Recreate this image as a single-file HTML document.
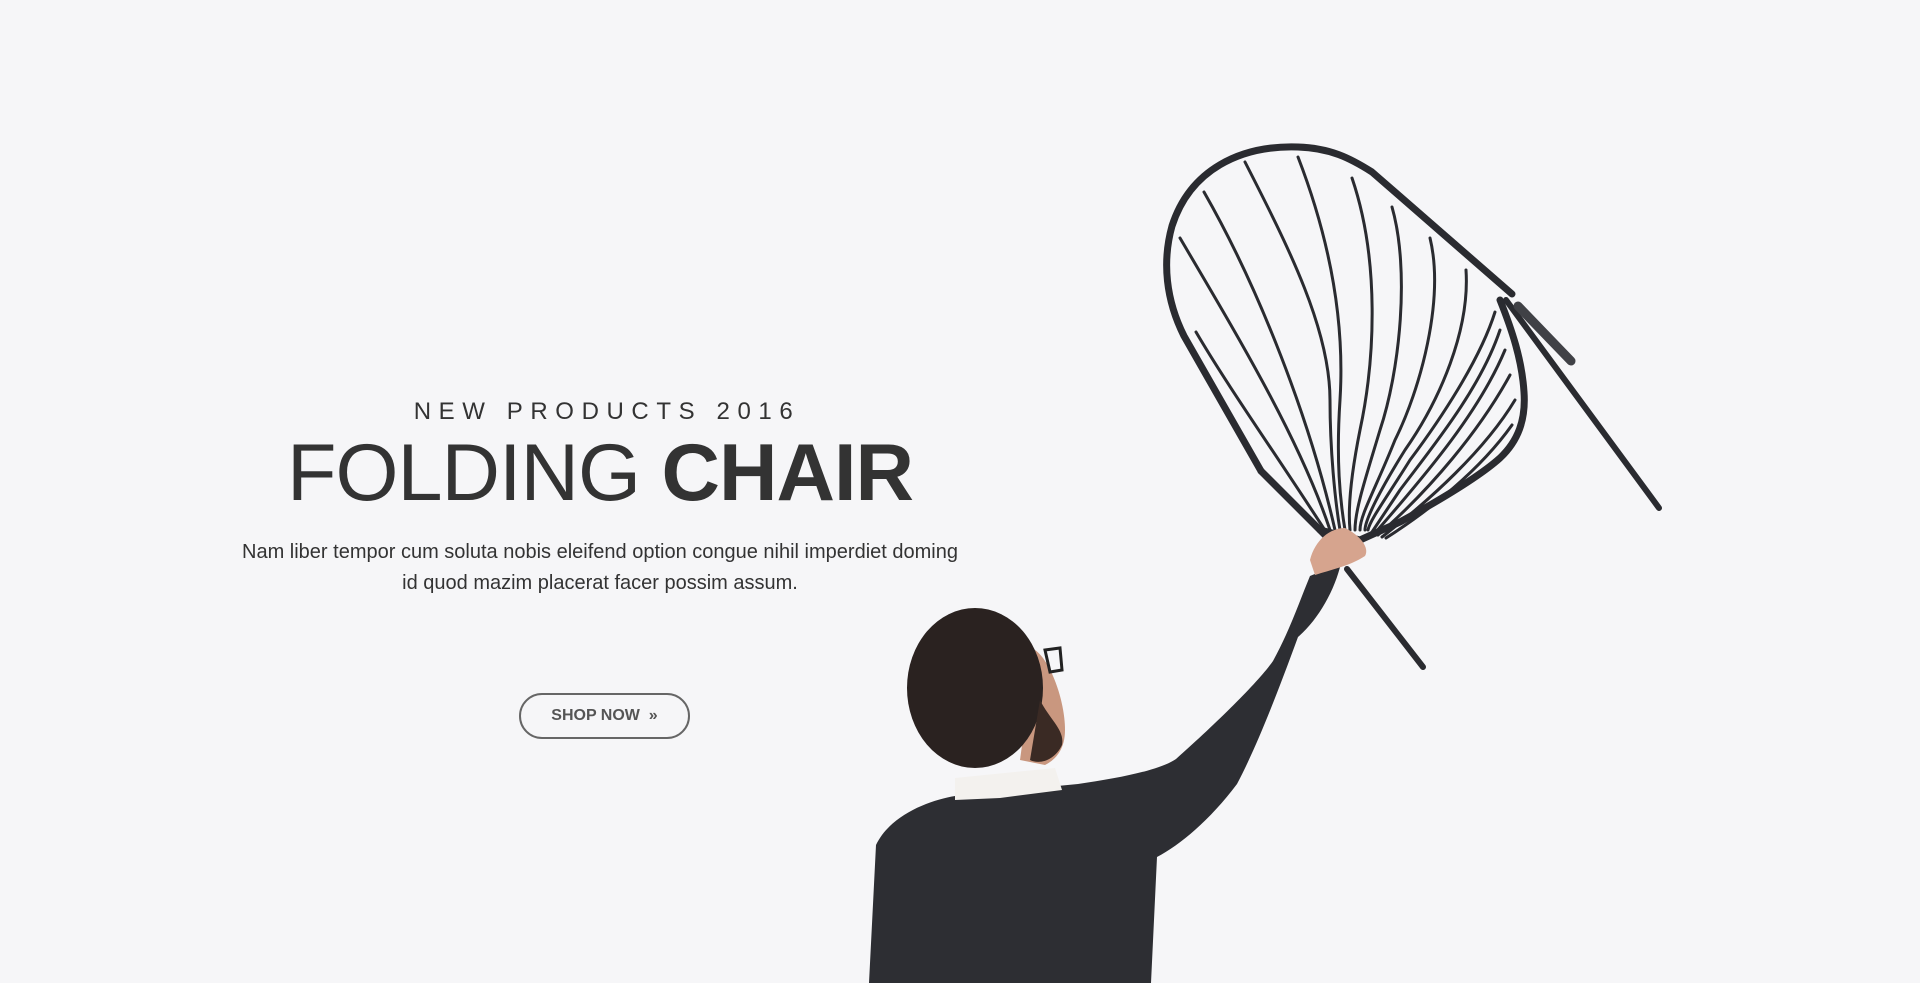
<!DOCTYPE html>
<html><head><meta charset="utf-8"><style>
html,body{margin:0;padding:0;width:1920px;height:983px;overflow:hidden;background:#f6f6f8;font-family:"Liberation Sans",sans-serif;color:#333}
.t{position:absolute;left:0;width:1200px;text-align:center}
#sub{top:398px;font-size:24px;letter-spacing:7.6px;color:#333;padding-left:7px}
#h{top:428px;font-size:81px;letter-spacing:-1px;color:#333;line-height:90px}
#h b{font-weight:900}
#p{top:537px;font-size:20px;line-height:31px;color:#333}
#btn{position:absolute;left:519px;top:693px;width:167px;height:42px;border:2px solid #666;border-radius:24px;text-align:center;line-height:42px;font-size:16px;font-weight:bold;color:#555}
svg{position:absolute;left:0;top:0}
</style></head><body>
<svg width="1920" height="983" viewBox="0 0 1920 983">
<g fill="none" stroke="#2a2b30" stroke-linecap="round">
<path stroke-width="7" d="M1261 471 L1184 336 C1166 300 1162 262 1172 226 C1190 170 1240 145 1298 147 C1330 148 1350 158 1372 172 L1512 294"/>
<path stroke-width="7" d="M1500 300 C1512 330 1522 360 1524 392 C1526 420 1518 441 1500 458 C1480 476 1440 500 1400 522 L1360 540 L1320 530"/>
<path stroke-width="6" d="M1506 300 L1659 508"/>
<path stroke-width="9" stroke="#404146" d="M1518 306 L1571 361"/>
<path stroke-width="7" d="M1261 471 L1329 539"/>
<path stroke-width="6" d="M1347 569 L1423 667"/>
<g stroke-width="3">
<path d="M1180 238 C1240 340 1300 440 1330 530"/>
<path d="M1204 192 C1260 290 1310 420 1335 530"/>
<path d="M1245 162 C1290 250 1330 330 1330 400 C1330 450 1335 500 1340 530"/>
<path d="M1298 157 C1330 240 1345 320 1340 400 C1336 460 1340 500 1345 530"/>
<path d="M1352 178 C1380 260 1375 360 1360 430 C1350 480 1348 510 1350 530"/>
<path d="M1392 207 C1410 270 1400 370 1380 430 C1365 480 1355 510 1355 530"/>
<path d="M1430 238 C1445 300 1420 390 1395 440 C1375 490 1360 515 1360 530"/>
<path d="M1466 270 C1470 330 1440 400 1405 450 C1380 490 1365 520 1365 530"/>
<path d="M1495 312 C1480 360 1440 420 1410 460 C1385 500 1370 520 1368 530"/>
<path d="M1500 330 C1480 390 1430 450 1400 490 L1372 532"/>
<path d="M1505 350 C1480 410 1430 470 1375 533"/>
<path d="M1510 375 C1480 430 1430 490 1378 535"/>
<path d="M1515 400 C1485 450 1430 500 1382 537"/>
<path d="M1512 425 C1480 470 1430 510 1386 538"/>
<path d="M1196 332 C1230 390 1280 460 1328 535"/>
</g>
</g>
<path fill="#2d2e33" d="M869 983 L876 845 C890 815 930 800 955 796 L1078 784 C1120 778 1160 770 1176 759 C1220 720 1260 680 1273 661 C1290 630 1300 600 1310 576 L1341 563 C1335 590 1318 620 1298 637 C1275 700 1255 750 1237 784 C1210 820 1180 845 1157 857 L1151 983 Z"/>
<path fill="#f3f1ee" d="M955 778 L1055 768 L1062 790 L1000 798 L955 800 Z"/>
<path fill="#d6a48e" d="M1310 560 C1315 540 1330 528 1345 528 C1360 535 1370 548 1365 556 C1350 566 1330 570 1315 575 Z"/>
<path fill="#c9977f" d="M1035 650 C1050 660 1065 700 1065 730 C1065 750 1055 760 1045 765 L1020 760 Z"/>
<ellipse cx="975" cy="688" rx="68" ry="80" fill="#2a2220"/>
<path fill="#3a2a24" d="M1040 700 C1050 720 1065 730 1062 745 C1055 760 1040 765 1030 760 Z"/>
<path fill="none" stroke="#222" stroke-width="3" d="M1045 650 L1060 648 L1062 670 L1050 672 Z"/>
</svg>
<div class="t" id="sub">NEW PRODUCTS 2016</div>
<div class="t" id="h">FOLDING <b>CHAIR</b></div>
<div class="t" id="p">Nam liber tempor cum soluta nobis eleifend option congue nihil imperdiet doming<br>id quod mazim placerat facer possim assum.</div>
<div id="btn">SHOP NOW &nbsp;&raquo;</div>
</body></html>
